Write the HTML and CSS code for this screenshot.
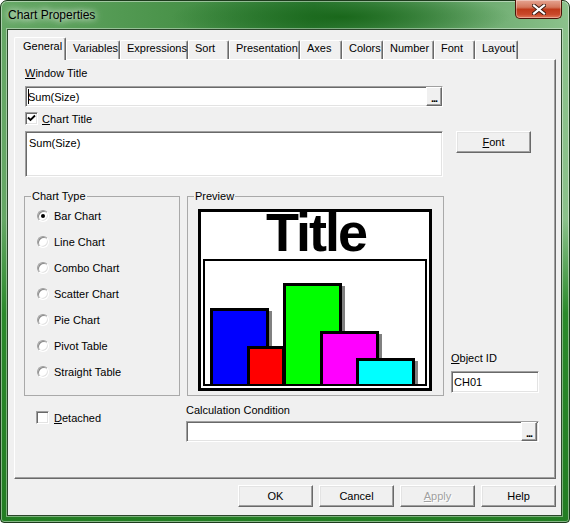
FILE: index.html
```html
<!DOCTYPE html>
<html lang="en">
<head>
  <meta charset="UTF-8" />
  <title>Chart Properties</title>
  <link rel="stylesheet" href="styles.css">
</head>
<body>

<div class="window">
  <!-- Title bar -->
  <div class="titlebar">
    <span class="caption">Chart Properties</span>
    <button class="close" aria-label="Close">
      <svg width="14" height="11" viewBox="0 0 14 11">
        <path d="M2 1.5 L12 9.5 M12 1.5 L2 9.5" stroke="#3a1a10" stroke-width="4" stroke-linecap="square"/>
        <path d="M2 1.5 L12 9.5 M12 1.5 L2 9.5" stroke="#fff" stroke-width="2.2" stroke-linecap="square"/>
      </svg>
    </button>
  </div>

  <div class="client">
    <!-- Tabs -->
    <div class="tabs">
      <div class="tab active tab-general">General</div>
      <div class="tab tab-variables">Variables</div>
      <div class="tab tab-expressions">Expressions</div>
      <div class="tab tab-sort">Sort</div>
      <div class="tab tab-presentation">Presentation</div>
      <div class="tab tab-axes">Axes</div>
      <div class="tab tab-colors">Colors</div>
      <div class="tab tab-number">Number</div>
      <div class="tab tab-font">Font</div>
      <div class="tab tab-layout">Layout</div>
    </div>

    <div class="panel">
      <div class="label"><u>W</u>indow Title</div>
      <div class="field sunken window-title">
        <span class="caret"></span><span class="value">Sum(Size)</span>
        <button class="dots">...</button>
      </div>

      <div class="check-row">
        <span class="checkbox sunken">
          <svg width="9" height="9" viewBox="0 0 9 9"><path d="M1 3.5 L3.5 6 L8 1.5" fill="none" stroke="#000" stroke-width="1.8"/></svg>
        </span>
        <span><u>C</u>hart Title</span>
      </div>

      <div class="title-row">
        <div class="textarea sunken">Sum(Size)</div>
        <button class="btn font-btn"><u>F</u>ont</button>
      </div>

      <div class="group-row">
        <fieldset class="group chart-type">
          <legend>Chart Type</legend>
          <div class="radio-row"><span class="radio on"></span>Bar Chart</div>
          <div class="radio-row"><span class="radio"></span>Line Chart</div>
          <div class="radio-row"><span class="radio"></span>Combo Chart</div>
          <div class="radio-row"><span class="radio"></span>Scatter Chart</div>
          <div class="radio-row"><span class="radio"></span>Pie Chart</div>
          <div class="radio-row"><span class="radio"></span>Pivot Table</div>
          <div class="radio-row"><span class="radio"></span>Straight Table</div>
        </fieldset>

        <fieldset class="group preview">
          <legend>Preview</legend>
          <div class="preview-box">
            <div class="preview-title">Title</div>
            <svg class="plot" width="224" height="127" viewBox="0 0 224 127">
              <defs>
                <clipPath id="plot"><rect x="2" y="2" width="220" height="123"/></clipPath>
              </defs>
              <rect x="1" y="1" width="222" height="125" fill="#fff" stroke="#000" stroke-width="2"/>
              <g clip-path="url(#plot)">
                <rect x="10" y="52" width="59" height="90" fill="#808080"/>
                <rect x="8.5" y="50.5" width="56" height="90" fill="#0000ff" stroke="#000" stroke-width="3"/>
                <rect x="47" y="90" width="38" height="60" fill="#808080"/>
                <rect x="45.5" y="88.5" width="35" height="60" fill="#ff0000" stroke="#000" stroke-width="3"/>
                <rect x="83" y="27" width="59" height="120" fill="#808080"/>
                <rect x="81.5" y="25.5" width="56" height="120" fill="#00ff00" stroke="#000" stroke-width="3"/>
                <rect x="120" y="75" width="59" height="70" fill="#808080"/>
                <rect x="118.5" y="73.5" width="56" height="70" fill="#ff00ff" stroke="#000" stroke-width="3"/>
                <rect x="156" y="102" width="59" height="50" fill="#808080"/>
                <rect x="154.5" y="100.5" width="56" height="50" fill="#00ffff" stroke="#000" stroke-width="3"/>
              </g>
            </svg>
          </div>
        </fieldset>

        <div class="object-id">
          <div class="label"><u>O</u>bject ID</div>
          <div class="field sunken">CH01</div>
        </div>
      </div>

      <div class="bottom-row">
        <div class="detached">
          <div class="check-row">
            <span class="checkbox sunken"></span>
            <span><u>D</u>etached</span>
          </div>
        </div>
        <div class="calc">
          <div class="label">Calculation Condition</div>
          <div class="field sunken calc-field">
            <button class="dots">...</button>
          </div>
        </div>
      </div>
    </div>

    <!-- Dialog buttons -->
    <div class="buttons">
      <button class="btn">OK</button>
      <button class="btn">Cancel</button>
      <button class="btn disabled"><u>A</u>pply</button>
      <button class="btn">Help</button>
    </div>
  </div>
</div>

</body>
</html>
```

FILE: styles.css
```css
* {
  box-sizing: border-box;
}

body {
  margin: 0;
  width: 570px;
  height: 523px;
  overflow: hidden;
  background: #fff;
  font-family: "Liberation Sans", Arial, sans-serif;
  font-size: 11px;
  color: #000;
}

button {
  font-family: inherit;
  font-size: 11px;
  color: #000;
  padding: 0;
  margin: 0;
}

/* Window frame */
.window {
  width: 570px;
  height: 523px;
  border: 1px solid #1c3a1c;
  border-radius: 7px 7px 4px 4px;
  background:
    radial-gradient(ellipse 170px 26px at 340px 16px, rgba(20, 98, 20, 0.85), rgba(20, 98, 20, 0)),
    linear-gradient(to bottom, rgba(36, 130, 36, 0) 0, rgba(36, 130, 36, 0) 42%, #2b8a2b 60%, #237d23 100%),
    linear-gradient(to right, #66a866 0, #4a934a 30%, #32803a 55%, #8cc28c 100%);
  box-shadow: inset 0 0 0 1px rgba(255, 255, 255, 0.45);
  display: flex;
  flex-direction: column;
}

.titlebar {
  height: 28px;
  display: flex;
  justify-content: space-between;
  align-items: flex-start;
  padding-left: 7px;
}

.caption {
  line-height: 28px;
  font-size: 12px;
  text-shadow: 0 0 6px #fff, 0 0 10px rgba(255, 255, 255, 0.8);
}

.close {
  width: 47px;
  height: 19px;
  margin: -1px 7px 0 0;
  border: 1px solid #4b1408;
  border-top: none;
  border-radius: 0 0 5px 5px;
  background: linear-gradient(to bottom, #e6a592 0, #d4775c 40%, #bf3a1a 52%, #c9492a 80%, #e27a5a 100%);
  box-shadow: inset 0 0 0 1px rgba(255, 255, 255, 0.35);
  display: flex;
  align-items: center;
  justify-content: center;
}

.client {
  margin-left: 6px;
  width: 555px;
  height: 487px;
  background: #f0f0f0;
  border: 1px solid #2a462a;
  box-shadow: 0 0 0 1px rgba(255, 255, 255, 0.4);
}

/* Tabs */
.tabs {
  display: flex;
  align-items: flex-end;
  height: 22px;
  margin: 7px 0 0 6px;
}

.tab {
  height: 19px;
  padding: 1px 0 0 6px;
  line-height: 13px;
  border: 1px solid;
  border-color: #fff #696969 transparent #fff;
  border-bottom: none;
  border-radius: 2px 2px 0 0;
  box-shadow: inset -1px 0 0 #a0a0a0;
  white-space: nowrap;
}

.tab.active {
  height: 23px;
  margin-bottom: -1px;
  padding: 2px 0 0 8px;
  background: #f0f0f0;
  position: relative;
  z-index: 1;
}

.tab-general { width: 52px; }
.tab-variables { width: 54px; }
.tab-expressions { width: 68px; }
.tab-sort { width: 41px; }
.tab-presentation { width: 71px; }
.tab-axes { width: 42px; }
.tab-colors { width: 41px; }
.tab-number { width: 51px; }
.tab-font { width: 41px; }
.tab-layout { width: 43px; }

.panel {
  margin-left: 6px;
  width: 542px;
  height: 420px;
  border: 1px solid;
  border-color: #fff #696969 #696969 #fff;
  box-shadow: inset -1px -1px 0 #a0a0a0;
  padding: 7px 0 0 10px;
}

/* Common controls */
.label {
  line-height: 13px;
}

.sunken {
  border: 1px solid;
  border-color: #a0a0a0 #fff #fff #a0a0a0;
  box-shadow: inset 1px 1px 0 #696969, inset -1px -1px 0 #e3e3e3;
  background: #fff;
}

.field {
  height: 21px;
  display: flex;
  align-items: center;
  padding-left: 2px;
}

.window-title {
  width: 418px;
  margin-top: 6px;
}

.caret {
  width: 1px;
  height: 15px;
  background: #000;
  margin-right: -1px;
}

.value {
  flex: 1;
}

.dots {
  width: 16px;
  height: 19px;
  margin-left: auto;
  border: 1px solid;
  border-color: #fff #696969 #696969 #fff;
  box-shadow: inset -1px -1px 0 #a0a0a0;
  background: #f0f0f0;
  font-weight: bold;
  line-height: 20px;
  letter-spacing: -1px;
}

.btn {
  width: 75px;
  height: 22px;
  border: 1px solid;
  border-color: #fff #696969 #696969 #fff;
  box-shadow: inset -1px -1px 0 #a0a0a0, inset 1px 1px 0 #e3e3e3;
  background: #f0f0f0;
  text-align: center;
}

.btn.disabled {
  color: #a0a0a0;
  text-shadow: 1px 1px 0 #fff;
}

.check-row {
  display: flex;
  align-items: center;
  height: 13px;
  margin-top: 5px;
  gap: 4px;
}

.checkbox {
  width: 13px;
  height: 13px;
  padding: 1px;
  display: flex;
  align-items: center;
  justify-content: center;
}

.title-row {
  display: flex;
  align-items: flex-start;
  margin-top: 6px;
}

.textarea {
  width: 418px;
  height: 46px;
  padding: 5px 3px;
}

.font-btn {
  margin-left: 13px;
}

/* Group boxes */
.group-row {
  display: flex;
  margin-top: 13px;
  margin-left: -1px;
}

.group {
  margin: 0;
  min-width: 0;
  height: 206px;
  border: 1px solid #a9a9a9;
  padding: 0 0 0 6px;
}

.group legend {
  padding: 0 1px;
  line-height: 13px;
}

.chart-type {
  width: 156px;
}

.radio-row {
  height: 26px;
  display: flex;
  align-items: center;
  padding-left: 6px;
}

.radio {
  width: 12px;
  height: 12px;
  margin-right: 5px;
  border-radius: 50%;
  border: 1px solid;
  border-color: #a0a0a0 #fff #fff #a0a0a0;
  box-shadow: inset 1px 1px 0 #8a8a8a, inset -1px -1px 0 #e3e3e3;
  background: #fff;
  position: relative;
}

.radio.on::after {
  content: "";
  position: absolute;
  left: 3px;
  top: 3px;
  width: 4px;
  height: 4px;
  border-radius: 50%;
  background: #000;
}

.preview {
  width: 257px;
  margin-left: 7px;
}

.preview-box {
  width: 234px;
  height: 182px;
  margin: 6px 0 0 4px;
  border: 3px solid #000;
  background: #fff;
}

.preview-title {
  height: 41px;
  line-height: 41px;
  text-align: center;
  font-size: 54px;
  font-weight: bold;
  letter-spacing: -2px;
  padding-left: 2px;
}

.plot {
  display: block;
  margin: 6px 0 0 2px;
}

.object-id {
  width: 88px;
  margin: 0 0 3px 7px;
  align-self: flex-end;
}

.object-id .field {
  height: 22px;
  margin-top: 6px;
}

/* Bottom row */
.bottom-row {
  display: flex;
}

.detached {
  width: 161px;
  padding: 10px 0 0 11px;
}

.detached .check-row {
  gap: 5px;
}

.calc {
  width: 353px;
  padding-top: 8px;
}

.calc-field {
  margin-top: 4px;
  padding-right: 1px;
}

.calc-field .dots {
  height: 19px;
}

/* Dialog buttons */
.buttons {
  display: flex;
  justify-content: flex-end;
  gap: 6px;
  margin-top: 6px;
  padding-right: 5px;
}
```
